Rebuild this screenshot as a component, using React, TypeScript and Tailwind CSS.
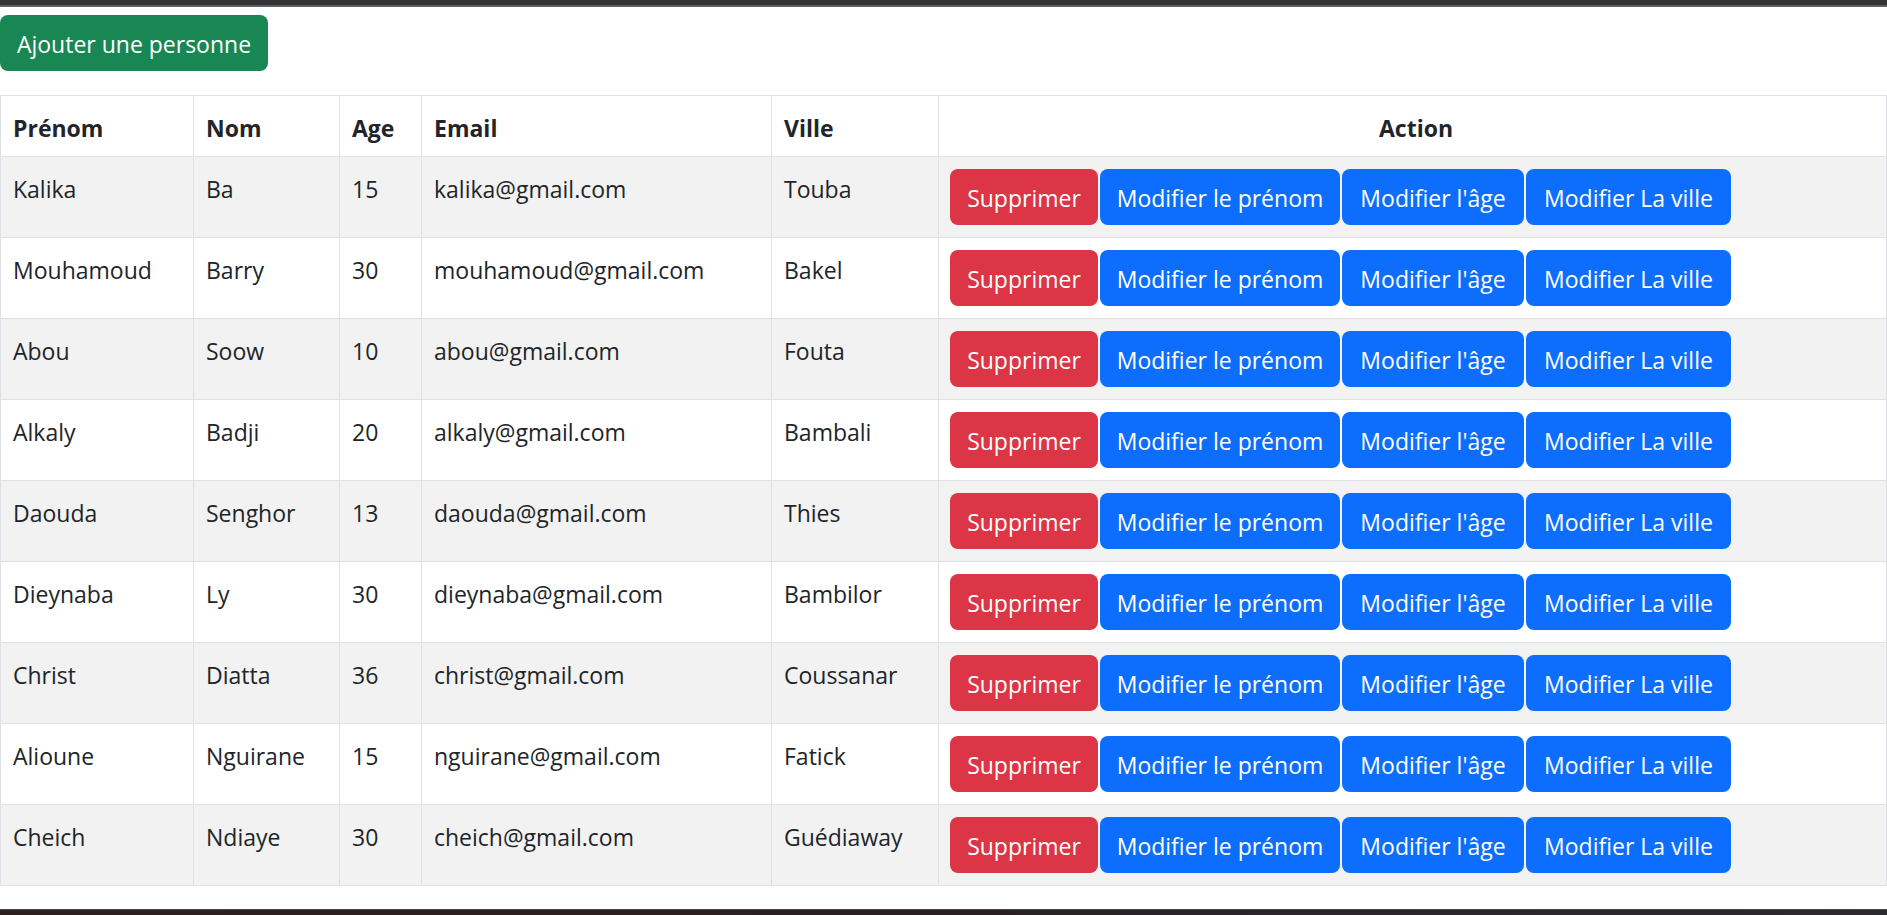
type Personne = {
  prenom: string;
  nom: string;
  age: number;
  email: string;
  ville: string;
};

const personnes: Personne[] = [
  { prenom: 'Kalika', nom: 'Ba', age: 15, email: 'kalika@gmail.com', ville: 'Touba' },
  { prenom: 'Mouhamoud', nom: 'Barry', age: 30, email: 'mouhamoud@gmail.com', ville: 'Bakel' },
  { prenom: 'Abou', nom: 'Soow', age: 10, email: 'abou@gmail.com', ville: 'Fouta' },
  { prenom: 'Alkaly', nom: 'Badji', age: 20, email: 'alkaly@gmail.com', ville: 'Bambali' },
  { prenom: 'Daouda', nom: 'Senghor', age: 13, email: 'daouda@gmail.com', ville: 'Thies' },
  { prenom: 'Dieynaba', nom: 'Ly', age: 30, email: 'dieynaba@gmail.com', ville: 'Bambilor' },
  { prenom: 'Christ', nom: 'Diatta', age: 36, email: 'christ@gmail.com', ville: 'Coussanar' },
  { prenom: 'Alioune', nom: 'Nguirane', age: 15, email: 'nguirane@gmail.com', ville: 'Fatick' },
  { prenom: 'Cheich', nom: 'Ndiaye', age: 30, email: 'cheich@gmail.com', ville: 'Guédiaway' },
];

const cell = 'border border-[#dee2e6] px-3 pt-[14px] pb-[10px] align-top leading-9';
const actionCell = 'border border-[#dee2e6] px-3 py-3 align-top';
const btn =
  'h-[56px] pt-[2px] rounded-[8px] border border-transparent text-white leading-9 flex items-center justify-center';

function App() {
  return (
    <div className="h-[915px] flex flex-col bg-white text-[#212529] text-[23px] font-['Open_Sans','Noto_Sans',sans-serif] overflow-hidden">
      {/* barre du haut */}
      <div className="h-[5px] bg-[#333336]" />
      <div className="h-[2px] bg-[#5d5d60]" />

      <div className="flex-1 flex flex-col">
        <button className="mt-[8px] w-[268px] h-[56px] pt-[2px] rounded-[8px] bg-[#198754] text-white leading-9">
          Ajouter une personne
        </button>

        <table className="mt-[24px] w-full table-fixed border-collapse">
          <thead>
            <tr className="font-bold text-left">
              <th className={`${cell} w-[193px]`}>Prénom</th>
              <th className={`${cell} w-[146px]`}>Nom</th>
              <th className={`${cell} w-[82px]`}>Age</th>
              <th className={`${cell} w-[350px]`}>Email</th>
              <th className={`${cell} w-[167px]`}>Ville</th>
              <th className={`${cell} text-center pl-[19px]`}>Action</th>
            </tr>
          </thead>
          <tbody>
            {personnes.map((p, index) => (
              <tr key={index} className={index % 2 === 0 ? 'bg-[#f2f2f2]' : 'bg-white'}>
                <td className={cell}>{p.prenom}</td>
                <td className={cell}>{p.nom}</td>
                <td className={cell}>{p.age}</td>
                <td className={cell}>{p.email}</td>
                <td className={cell}>{p.ville}</td>
                <td className={actionCell}>
                  <div className="flex gap-[2px] -ml-px">
                    <button className={`${btn} w-[148px] bg-[#dc3545]`}>Supprimer</button>
                    <button className={`${btn} w-[240px] bg-[#0d6efd]`}>Modifier le prénom</button>
                    <button className={`${btn} w-[182px] bg-[#0d6efd]`}>Modifier l'âge</button>
                    <button className={`${btn} w-[205px] bg-[#0d6efd]`}>Modifier La ville</button>
                  </div>
                </td>
              </tr>
            ))}
          </tbody>
        </table>
      </div>

      {/* barre du bas */}
      <div className="h-px bg-[#4a4448]" />
      <div className="h-[5px] bg-gradient-to-r from-[#2e1f1f] via-[#2a2024] to-[#2b2a2e]" />
    </div>
  );
}

export default App;
